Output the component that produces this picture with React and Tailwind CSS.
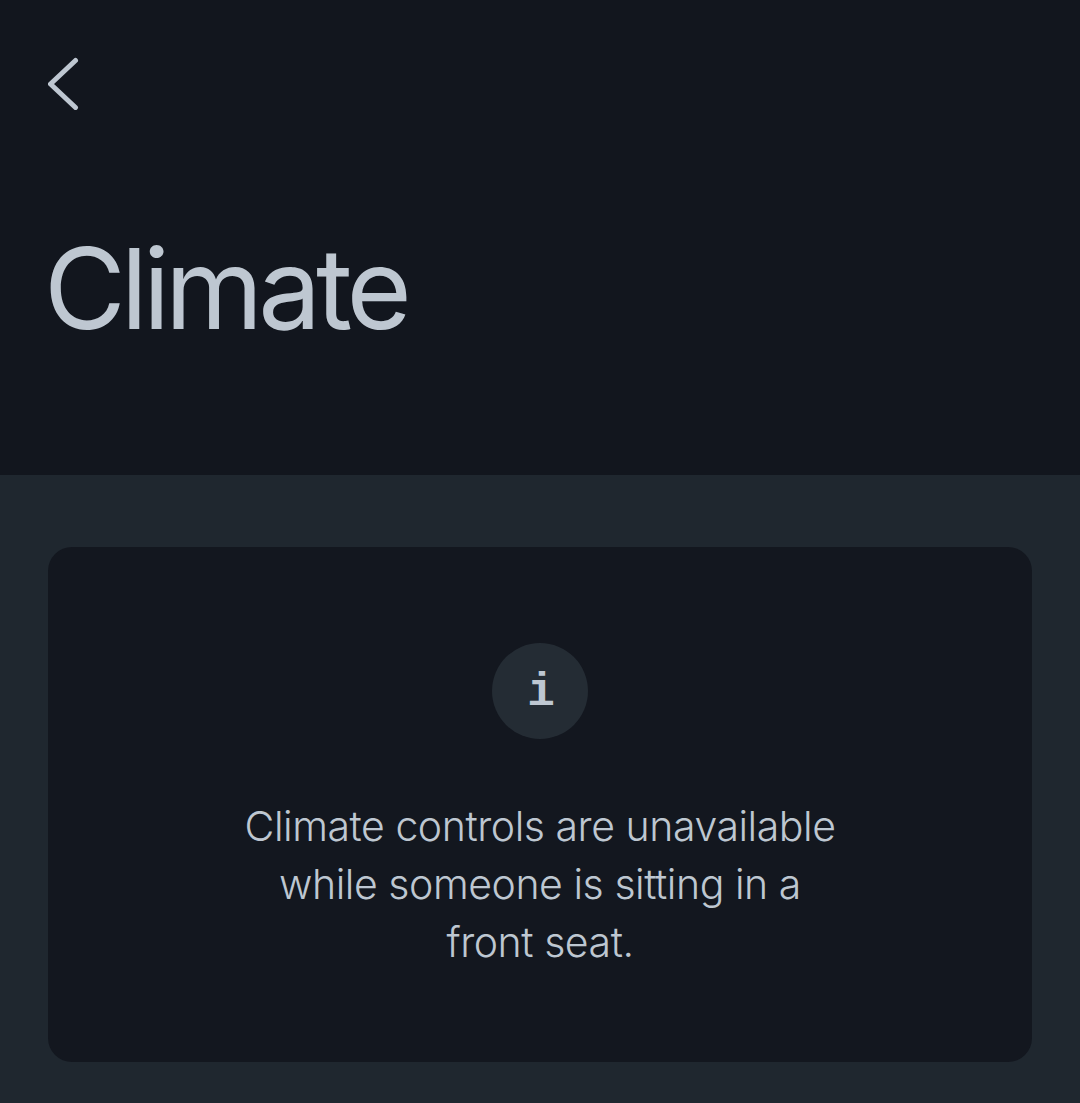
import React from "react";

function BackIcon() {
  return (
    <svg width="32" height="54" viewBox="0 0 32 54" fill="none" aria-hidden="true">
      <path d="M27.5 4.5 L2.5 28 L27.5 51.5" stroke="#bec7d1" strokeWidth="5" strokeLinecap="round" strokeLinejoin="round" />
    </svg>
  );
}

export default function App() {
  return (
    <div className="h-[1103px] w-[1080px] overflow-hidden bg-[#1f272f] font-['Inter',sans-serif] text-[#bec7d1]">
      {/* Header */}
      <header className="flex h-[475px] flex-col bg-[#12161e] px-12 pt-[56px]">
        <button className="flex h-[54px] w-8 items-center">
          <BackIcon />
        </button>
        <h1 className="mt-[118px] -ml-1 text-[112px] leading-[120px] font-normal tracking-[-5px]">Climate</h1>
      </header>

      {/* Notice */}
      <main className="px-12 pt-[72px]">
        <div className="flex h-[515px] flex-col items-center rounded-[24px] bg-[#13171f] pt-24">
          <div className="flex h-24 w-24 items-center justify-center rounded-full bg-[#242c34]">
            <span className="mt-[3px] ml-[2px] font-['Liberation_Mono',monospace] text-[46px] leading-none font-bold">i</span>
          </div>
          <p className="mt-[58px] w-[640px] text-center text-[41px] leading-[58px] font-[350] tracking-[-0.45px]">
            Climate controls are unavailable
            <br />
            while someone is sitting in a
            <br />
            front seat.
          </p>
        </div>
      </main>
    </div>
  );
}
